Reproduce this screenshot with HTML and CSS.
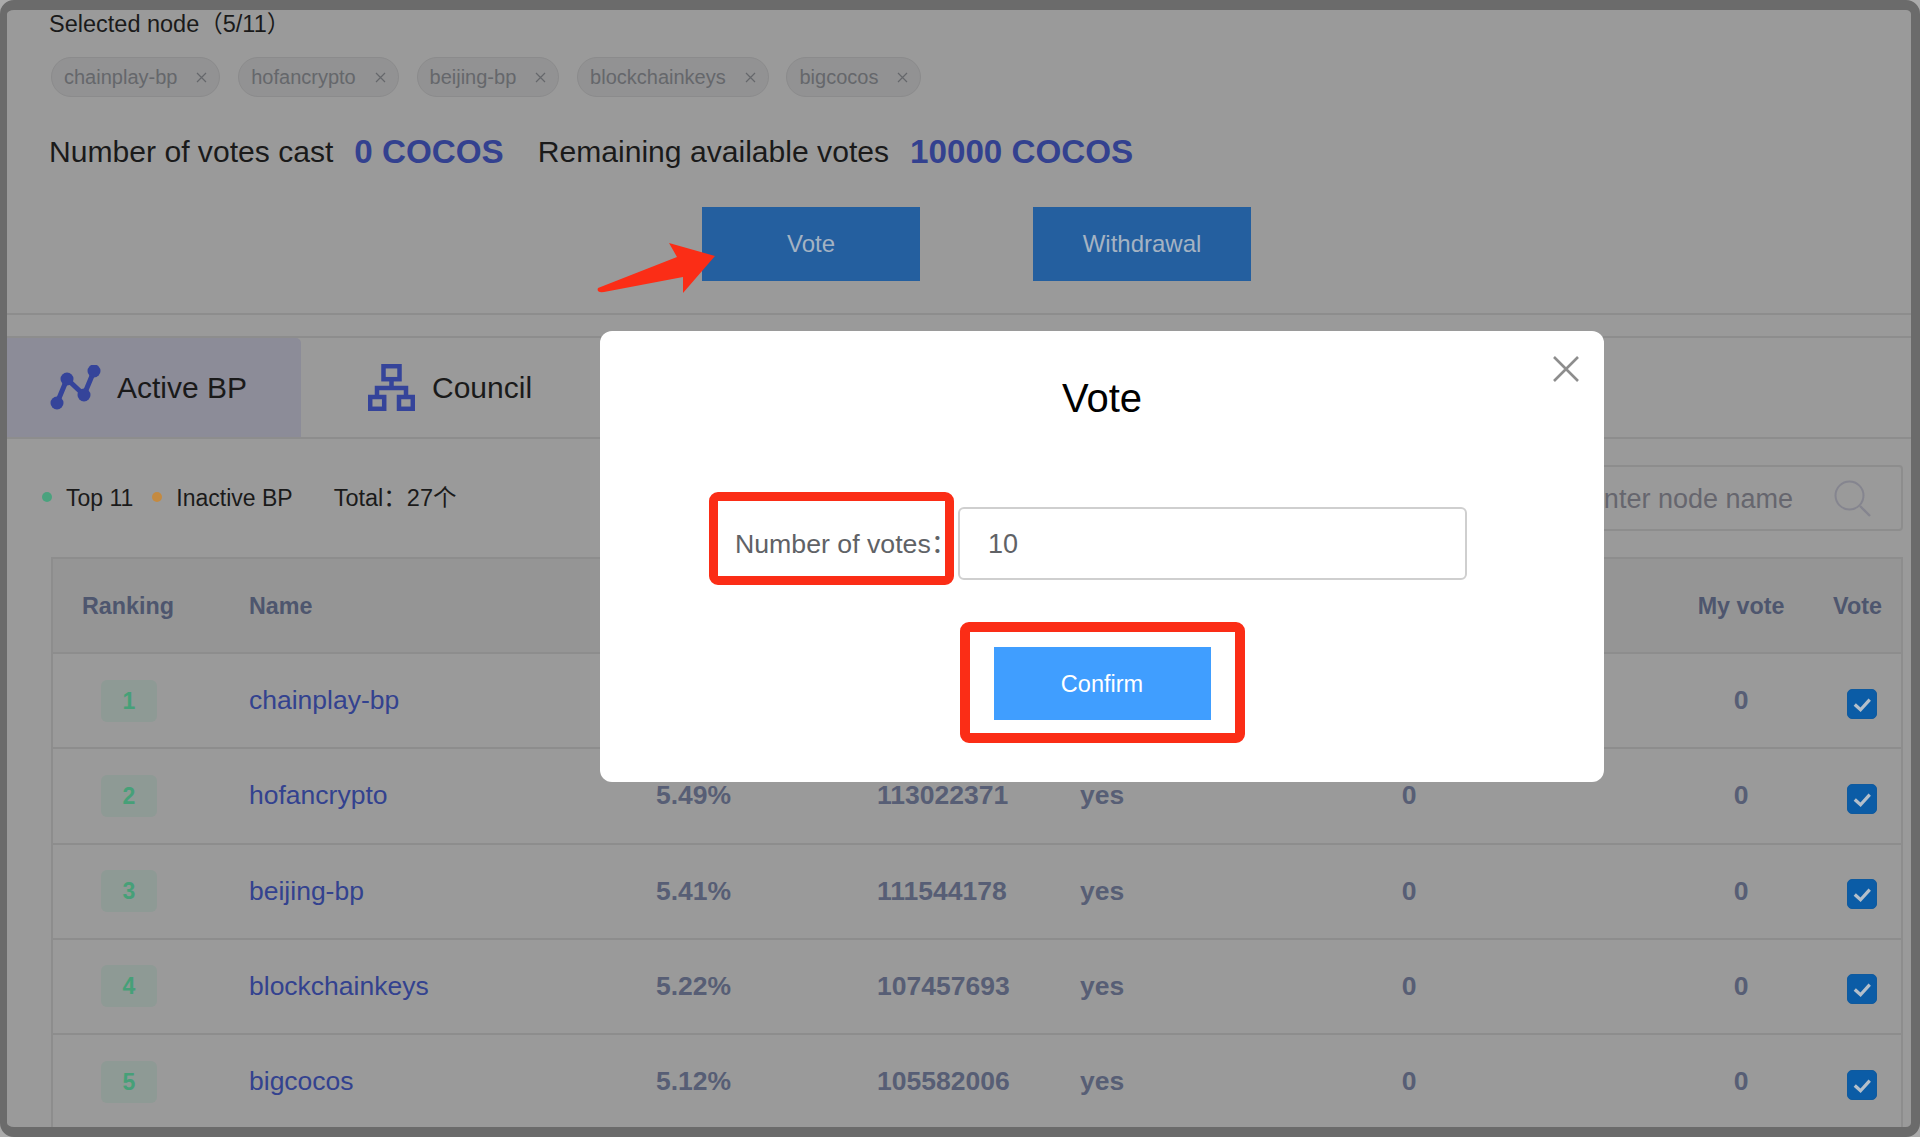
FILE: index.html
```html
<!DOCTYPE html>
<html lang="en">
<head>
  <meta charset="UTF-8" />
  <meta name="viewport" content="width=device-width, initial-scale=1.0" />
  <title>Vote</title>
  <link rel="stylesheet" href="styles.css">
</head>
<body>
  <div class="frame">
    <!-- Selected nodes -->
    <div class="selected">
      <div class="selected-title">Selected node（5/11）</div>
      <div class="chips">
        <span class="chip">chainplay-bp<svg class="chip-x" viewBox="0 0 11 11"><path d="M1 1l9 9M10 1l-9 9"/></svg></span>
        <span class="chip">hofancrypto<svg class="chip-x" viewBox="0 0 11 11"><path d="M1 1l9 9M10 1l-9 9"/></svg></span>
        <span class="chip">beijing-bp<svg class="chip-x" viewBox="0 0 11 11"><path d="M1 1l9 9M10 1l-9 9"/></svg></span>
        <span class="chip">blockchainkeys<svg class="chip-x" viewBox="0 0 11 11"><path d="M1 1l9 9M10 1l-9 9"/></svg></span>
        <span class="chip">bigcocos<svg class="chip-x" viewBox="0 0 11 11"><path d="M1 1l9 9M10 1l-9 9"/></svg></span>
      </div>
      <div class="stats">
        <span>Number of votes cast</span>
        <b class="amount">0 COCOS</b>
        <span class="stats-second">Remaining available votes</span>
        <b class="amount">10000 COCOS</b>
      </div>
      <div class="actions">
        <div class="dark-btn">Vote</div>
        <div class="dark-btn">Withdrawal</div>
      </div>
    </div>

    <!-- Tabs -->
    <div class="tabs">
      <div class="tab tab-active">
        <svg class="tab-icon-bp" viewBox="0 0 51 46">
          <polyline points="7,38 17,14 34,30 44,6" fill="none" stroke="#35449a" stroke-width="5"/>
          <circle cx="7" cy="38" r="6.5" fill="#35449a"/>
          <circle cx="17" cy="14" r="6.5" fill="#35449a"/>
          <circle cx="34" cy="30" r="6.5" fill="#35449a"/>
          <circle cx="44" cy="6" r="6.5" fill="#35449a"/>
        </svg>
        Active BP
      </div>
      <div class="tab tab-council">
        <svg class="tab-icon-council" viewBox="0 0 47 47">
          <g fill="none" stroke="#35449a" stroke-width="4.5">
            <rect x="15.5" y="2.2" width="16" height="13"/>
            <rect x="2.2" y="33" width="14" height="11.8"/>
            <rect x="31" y="33" width="13.8" height="11.8"/>
            <path d="M23.5 15v9M9 33v-9h29v9"/>
          </g>
        </svg>
        Council
      </div>
    </div>

    <!-- Legend and search -->
    <div class="toolbar">
      <div class="legend">
        <i class="dot dot-green"></i><span>Top 11</span>
        <i class="dot dot-orange"></i><span>Inactive BP</span>
        <span class="total">Total：27个</span>
      </div>
      <div class="search">
        <span class="search-text">Enter node name</span>
        <svg class="search-icon" viewBox="0 0 37 37"><circle cx="15.5" cy="15.5" r="14" fill="none" stroke="#85858f" stroke-width="2"/><path d="M26 26l10 10" stroke="#85858f" stroke-width="2.4"/></svg>
      </div>
    </div>

    <!-- Node table -->
    <div class="table">
      <div class="row row-head">
        <div class="c-rank">Ranking</div>
        <div class="c-name">Name</div>
        <div></div><div></div><div></div><div></div>
        <div class="c-mine">My vote</div>
        <div class="c-check">Vote</div>
      </div>
      <div class="row">
        <div class="c-rank"><span class="badge">1</span></div>
        <div class="c-name"><a class="node">chainplay-bp</a></div>
        <div></div><div></div><div></div><div></div>
        <div class="c-mine">0</div>
        <div class="c-check"><span class="check"><svg viewBox="0 0 29 29"><path d="M7 15l6 5.5L22.5 10" fill="none" stroke="#b4bfca" stroke-width="3.4"/></svg></span></div>
      </div>
      <div class="row">
        <div class="c-rank"><span class="badge">2</span></div>
        <div class="c-name"><a class="node">hofancrypto</a></div>
        <div>5.49%</div><div>113022371</div><div>yes</div><div class="c-zero">0</div>
        <div class="c-mine">0</div>
        <div class="c-check"><span class="check"><svg viewBox="0 0 29 29"><path d="M7 15l6 5.5L22.5 10" fill="none" stroke="#b4bfca" stroke-width="3.4"/></svg></span></div>
      </div>
      <div class="row">
        <div class="c-rank"><span class="badge">3</span></div>
        <div class="c-name"><a class="node">beijing-bp</a></div>
        <div>5.41%</div><div>111544178</div><div>yes</div><div class="c-zero">0</div>
        <div class="c-mine">0</div>
        <div class="c-check"><span class="check"><svg viewBox="0 0 29 29"><path d="M7 15l6 5.5L22.5 10" fill="none" stroke="#b4bfca" stroke-width="3.4"/></svg></span></div>
      </div>
      <div class="row">
        <div class="c-rank"><span class="badge">4</span></div>
        <div class="c-name"><a class="node">blockchainkeys</a></div>
        <div>5.22%</div><div>107457693</div><div>yes</div><div class="c-zero">0</div>
        <div class="c-mine">0</div>
        <div class="c-check"><span class="check"><svg viewBox="0 0 29 29"><path d="M7 15l6 5.5L22.5 10" fill="none" stroke="#b4bfca" stroke-width="3.4"/></svg></span></div>
      </div>
      <div class="row">
        <div class="c-rank"><span class="badge">5</span></div>
        <div class="c-name"><a class="node">bigcocos</a></div>
        <div>5.12%</div><div>105582006</div><div>yes</div><div class="c-zero">0</div>
        <div class="c-mine">0</div>
        <div class="c-check"><span class="check"><svg viewBox="0 0 29 29"><path d="M7 15l6 5.5L22.5 10" fill="none" stroke="#b4bfca" stroke-width="3.4"/></svg></span></div>
      </div>
    </div>

    <!-- Red arrow pointing at the Vote button -->
    <svg class="arrow" viewBox="0 0 130 65">
      <path d="M8 53L87 22L79 8L125 21L93 58L93 42L14 57Q6 58 8 53Z" fill="#fb2d16"/>
    </svg>

    <!-- Vote dialog -->
    <div class="modal">
      <svg class="modal-close" viewBox="0 0 26 26"><path d="M1 1l24 24M25 1L1 25" stroke="#8d8d8d" stroke-width="2.6"/></svg>
      <div class="modal-title">Vote</div>
      <div class="modal-form">
        <label class="modal-label">Number of votes：</label>
        <div class="modal-input">10</div>
      </div>
      <div class="confirm">Confirm</div>
      <div class="mark mark-label"></div>
      <div class="mark mark-confirm"></div>
    </div>
  </div>
</body>
</html>
```

FILE: styles.css
```css
* { margin: 0; padding: 0; box-sizing: border-box; }
html, body {
  width: 100%;
  height: 100%;
  background-color: #ababab;
  font-family: "Liberation Sans", "Noto Sans CJK SC", sans-serif;
  overflow: hidden;
}
.frame {
  position: relative;
  width: 1920px;
  height: 1137px;
  background-color: #9a9a9a;
  border: solid #6b6b6b;
  border-width: 10px 9px 10px 7px;
  border-radius: 14px;
  overflow: hidden;
  color: #1a1a1a;
}

.selected { padding-left: 42px; height: 305px; border-bottom: 2px solid #8d8d8d; }
.selected-title { height: 28px; font-size: 23.5px; line-height: 28px; }
.chips { display: flex; gap: 17.8px; margin: 19px 0 0 2px; }
.chip {
  display: flex;
  align-items: center;
  height: 40px;
  padding: 0 12px;
  font-size: 20px;
  color: #65676b;
  background-color: #929293;
  border: 1px solid #8b8b8c;
  border-radius: 20px;
}
.chip-x { width: 11px; height: 11px; margin-left: 19px; fill: none; stroke: #65676b; stroke-width: 1.2; }
.stats { display: flex; align-items: center; height: 40px; margin-top: 35px; font-size: 30.1px; }
.amount { margin-left: 21px; font-size: 33.2px; color: #33418f; }
.stats-second { margin-left: 34px; }
.actions { display: flex; gap: 113px; margin: 35px 0 0 653px; }
.dark-btn {
  width: 218px;
  height: 74px;
  line-height: 74px;
  text-align: center;
  font-size: 24px;
  color: #a4b3c3;
  background-color: #245f9f;
}

.tabs {
  display: flex;
  height: 103px;
  margin-top: 21px;
  border-top: 2px solid #8d8d8d;
  border-bottom: 2px solid #8d8d8d;
  font-size: 30px;
}
.tab { display: flex; align-items: center; height: 100%; }
.tab-active {
  width: 294px;
  padding-left: 43px;
  gap: 16px;
  background-color: #8c8c98;
  border-top-right-radius: 5px;
}
.tab-council { padding-left: 67px; gap: 17px; }
.tab-icon-bp { width: 51px; height: 46px; }
.tab-icon-council { width: 47px; height: 47px; }

.toolbar {
  display: flex;
  justify-content: space-between;
  align-items: center;
  margin-top: 26px;
  padding: 0 8px 0 35px;
  font-size: 23px;
  line-height: 30px;
}
.legend { display: flex; align-items: center; }
.legend span { height: 30px; }
.dot { width: 10px; height: 10px; border-radius: 50%; margin: -2px 14px 0 0; }
.dot-green { background-color: #4aa27e; }
.dot-orange { background-color: #c48a40; margin-left: 19px; }
.total { margin-left: 41px; font-size: 23.5px; }
.search {
  display: flex;
  justify-content: flex-end;
  align-items: center;
  width: 400px;
  height: 66px;
  padding-right: 30px;
  border: 2px solid #8d8d8d;
  border-radius: 4px;
}
.search-text { padding-top: 2px; font-size: 27px; color: #66666e; }
.search-icon { width: 37px; height: 37px; margin-left: 41px; }

.table { margin: 26px 8px 0 44px; border: solid #8d8d8d; border-width: 2px 2px 0 2px; }
.row {
  display: grid;
  grid-template-columns: 152px 451px 221px 203px 220px 218px 291px 92px;
  align-items: center;
  height: 95.25px;
  font-size: 26.5px;
  font-weight: bold;
  color: #575e75;
  border-bottom: 2px solid #8d8d8d;
}
.row-head { height: 95px; padding-top: 2px; font-size: 23.3px; background-color: #959595; color: #4e566e; }
.row-head .c-rank { padding-right: 2px; }
.c-rank, .c-zero, .c-check { text-align: center; }
.c-name { padding-left: 44px; }
.c-mine { padding-left: 155px; text-align: center; }
.c-check { padding-left: 5px; }
.badge {
  display: block;
  width: 56px;
  height: 42px;
  margin: 0 auto;
  line-height: 42px;
  font-size: 23px;
  color: #46a078;
  background-color: #8e9a95;
  border-radius: 6px;
}
.node { font-weight: normal; color: #33428f; font-size: 26.5px; }
.check {
  display: block;
  width: 30px;
  height: 30px;
  margin: 6px 0 0 33px;
  background-color: #0b5ca6;
  border: 1px solid #0f5a9e;
  border-radius: 5px;
}
.check svg { display: block; width: 100%; height: 100%; }

.arrow { position: absolute; left: 583px; top: 225px; width: 130px; height: 65px; }

.modal {
  position: absolute;
  left: 593px;
  top: 321px;
  display: flex;
  flex-direction: column;
  align-items: center;
  width: 1004px;
  height: 451px;
  padding-top: 45px;
  background-color: #fff;
  border-radius: 12px;
}
.modal-close { position: absolute; top: 25px; right: 25px; width: 26px; height: 26px; }
.modal-title { height: 44px; font-size: 40px; line-height: 44px; color: #000; }
.modal-form { display: flex; align-items: center; align-self: flex-start; margin: 87px 0 0 135px; }
.modal-label { width: 223px; height: 36px; font-size: 26.7px; line-height: 36px; color: #606266; }
.modal-input {
  width: 509px;
  height: 73px;
  padding-left: 28px;
  line-height: 71px;
  font-size: 27px;
  color: #606266;
  border: 2px solid #cfcfcf;
  border-radius: 6px;
}
.confirm {
  width: 217px;
  height: 73px;
  margin-top: 67px;
  line-height: 75px;
  text-align: center;
  font-size: 23.5px;
  color: #fff;
  background-color: #409eff;
}
.mark { position: absolute; border: solid #fb2d16; border-radius: 9px; }
.mark-label { left: 109px; top: 161px; width: 245px; height: 93px; border-width: 9px; }
.mark-confirm { left: 360px; top: 291px; width: 285px; height: 121px; border-width: 10px; }
```
